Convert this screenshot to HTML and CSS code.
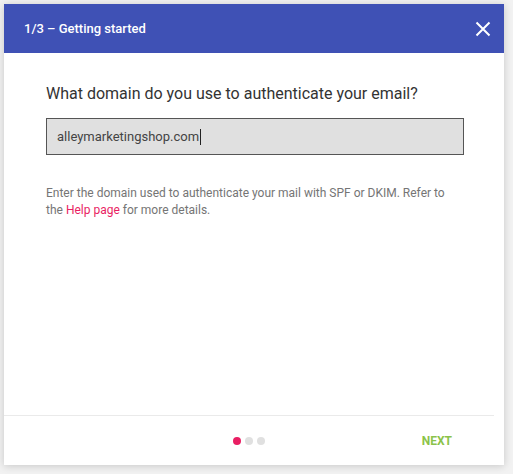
FILE: index.html
```html
<!DOCTYPE html>
<html>
<head>
<meta charset="utf-8">
<link rel="stylesheet" href="styles.css">
</head>
<body>
<div class="dialog">
  <div class="header">
    <span class="title">1/3 – Getting started</span>
    <svg class="close" width="16" height="16" viewBox="0 0 16 16"><path d="M1.5 1.5 L14.5 14.5 M14.5 1.5 L1.5 14.5" stroke="#fff" stroke-width="2" fill="none"/></svg>
  </div>
  <div class="body">
    <h2 class="question">What domain do you use to authenticate your email?</h2>
    <div class="input"><span>alleymarketingshop.com</span><span class="caret"></span></div>
    <p class="help">Enter the domain used to authenticate your mail with SPF or DKIM. Refer to the <span class="link">Help page</span> for more details.</p>
  </div>
  <div class="footer">
    <div class="dots"><span class="dot active"></span><span class="dot"></span><span class="dot"></span></div>
    <span class="next">NEXT</span>
  </div>
</div>
</body>
</html>
```

FILE: styles.css
```css
html, body { margin: 0; padding: 0; }
body {
  background: #f2f2f2;
  font-family: Roboto, "Liberation Sans", sans-serif;
  padding: 4px 9px 9px 4px;
  width: 500px;
}
.dialog {
  width: 500px;
  height: 461px;
  background: #fff;
  box-shadow: 0 1px 8px rgba(0,0,0,0.18);
  display: flex;
  flex-direction: column;
}
.header {
  height: 49px;
  background: #3f51b5;
  display: flex;
  align-items: center;
  padding: 0 13px 0 20px;
  flex: none;
}
.title {
  color: #fff;
  font-size: 13px;
  font-weight: 500;
  flex: 1;
}
.close { display: block; }
.body {
  flex: 1;
  padding: 31px 40px 0 42px;
}
.question {
  margin: 0;
  font-size: 16px;
  font-weight: 400;
  color: #333;
  line-height: 20px;
}
.input {
  margin-top: 14px;
  height: 35px;
  border: 1px solid #555;
  background: #e0e0e0;
  display: flex;
  align-items: center;
  padding-left: 10px;
  font-size: 13px;
  color: #444;
}
.caret {
  width: 1px;
  height: 16px;
  background: #222;
  margin-left: 1px;
}
.help {
  margin: 30px 0 0;
  font-size: 12px;
  line-height: 17px;
  color: #757575;
  padding-right: 10px;
}
.link { color: #e91e63; }
.footer {
  flex: none;
  height: 49px;
  border-top: 1px solid #eaeaea;
  margin-right: 10px;
  display: flex;
  align-items: center;
  padding-left: 229px;
}
.dots { display: flex; gap: 4px; }
.dot {
  width: 8px;
  height: 8px;
  border-radius: 50%;
  background: #e0e0e0;
}
.dot.active { background: #e91e63; }
.next {
  margin-left: auto;
  margin-right: 42px;
  color: #8bc34a;
  font-size: 12px;
  font-weight: 700;
}
```
